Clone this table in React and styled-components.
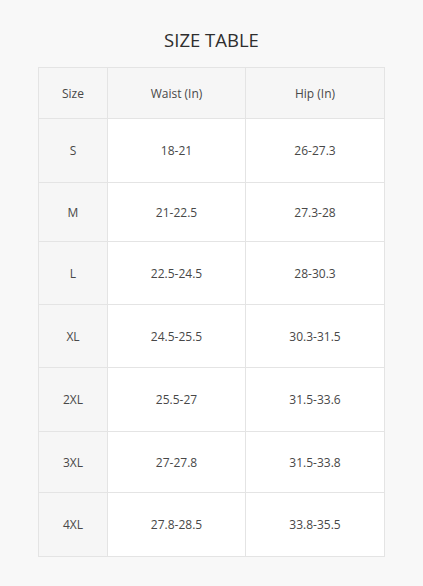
import React from 'react'
import styled, { createGlobalStyle } from 'styled-components'

const GlobalStyle = createGlobalStyle`
  html, body {
    margin: 0;
    padding: 0;
    background: #f8f8f8;
  }
  body {
    font-family: "Open Sans", "Liberation Sans", sans-serif;
    color: #333;
  }
`

const Page = styled.div`
  width: 423px;
  height: 586px;
  box-sizing: border-box;
  padding-top: 27px;
`

const Title = styled.h1`
  margin: 0 0 14px;
  font-size: 18.5px;
  line-height: 26px;
  font-weight: 400;
  text-align: center;
  color: #2e2e2e;
`

const Table = styled.table`
  margin-left: 38px;
  width: 346px;
  border-collapse: collapse;
  border: 1px solid #d6d6d6;
  table-layout: fixed;
`

const Cell = styled.td`
  height: ${p => p.$h}px;
  padding: 0;
  box-sizing: border-box;
  border: 1px solid #e4e4e4;
  text-align: center;
  vertical-align: middle;
  font-size: 12px;
  color: #484848;
  background: ${p => (p.$shade ? '#f6f6f6' : '#ffffff')};
`

const rows = [
  ['S', '18-21', '26-27.3', 64],
  ['M', '21-22.5', '27.3-28', 59],
  ['L', '22.5-24.5', '28-30.3', 63],
  ['XL', '24.5-25.5', '30.3-31.5', 63],
  ['2XL', '25.5-27', '31.5-33.6', 64],
  ['3XL', '27-27.8', '31.5-33.8', 61],
  ['4XL', '27.8-28.5', '33.8-35.5', 64],
]

export default function App() {
  return (
    <Page>
      <GlobalStyle />
      <Title>SIZE TABLE</Title>
      <Table>
        <colgroup>
          <col style={{ width: 69 }} />
          <col style={{ width: 138 }} />
          <col style={{ width: 139 }} />
        </colgroup>
        <tbody>
          <tr>
            <Cell $h={51} $shade>Size</Cell>
            <Cell $h={51} $shade>Waist (In)</Cell>
            <Cell $h={51} $shade>Hip (In)</Cell>
          </tr>
          {rows.map(([size, waist, hip, h]) => (
            <tr key={size}>
              <Cell $h={h} $shade>{size}</Cell>
              <Cell $h={h}>{waist}</Cell>
              <Cell $h={h}>{hip}</Cell>
            </tr>
          ))}
        </tbody>
      </Table>
    </Page>
  )
}
